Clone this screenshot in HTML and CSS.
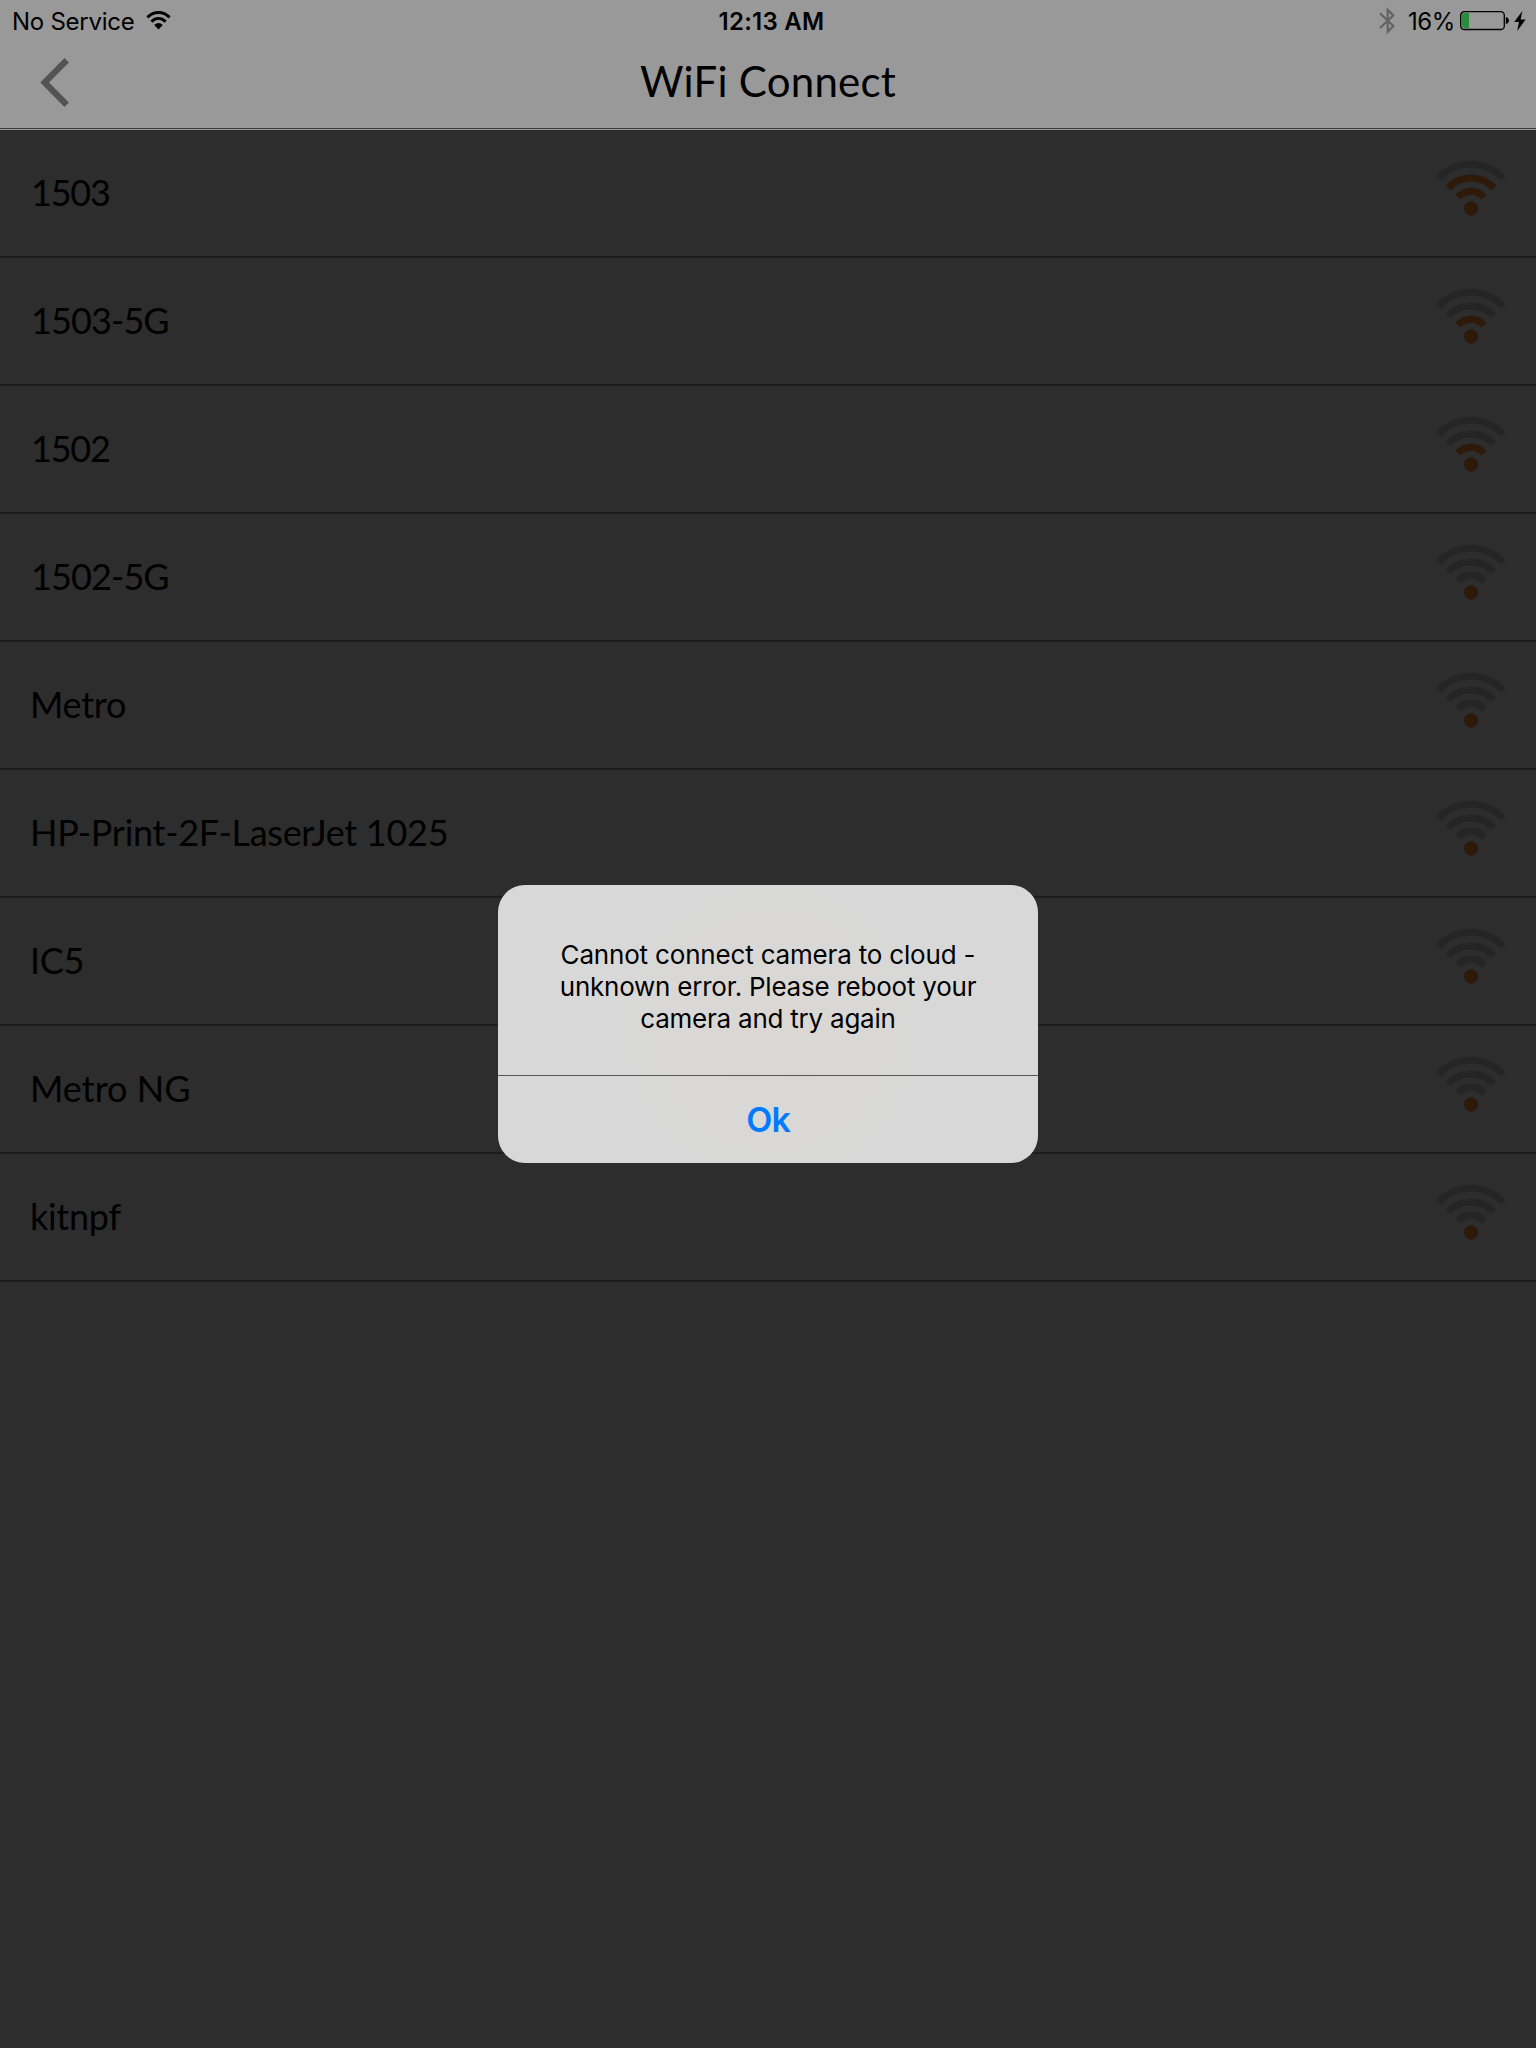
FILE: index.html
```html
<!DOCTYPE html>
<html lang="en">
<head>
<meta charset="utf-8">
<title>WiFi Connect</title>
<link rel="stylesheet" href="styles.css">
</head>
<body>
<svg class="defs" width="0" height="0" aria-hidden="true">
  <symbol id="signal" viewBox="0 0 70 57">
    <path class="arc arc-3" d="M3 18.5A43.2 43.2 0 0 1 67 18.5"/>
    <path class="arc arc-2" d="M12.3 27.8A31 31 0 0 1 57.7 27.8"/>
    <path class="arc arc-1" d="M22 37.3A17.1 17.1 0 0 1 48 37.3"/>
    <circle class="dot" cx="35" cy="48.5" r="7"/>
  </symbol>
</svg>
<header class="header">
  <div class="status">
    <div class="status-left">
      <span class="carrier">No Service</span>
      <svg class="status-wifi" width="26" height="20" viewBox="0 0 26 20">
        <path d="M1.4 6.3C8 0 17 0 23.6 6.3M5.4 10.6C9.8 6.5 15.2 6.5 19.6 10.6" fill="none" stroke="#000" stroke-width="3"/>
        <path d="M8.2 14.1C11 11.4 14 11.4 16.8 14.1L12.5 18.6Z"/>
      </svg>
    </div>
    <span class="time">12:13 AM</span>
    <div class="status-right">
      <svg width="17" height="28" viewBox="0 0 17 28"><path d="M1 6.3L14.3 19L8.7 24.8V2.8L14.3 8.5L1 21" fill="none" stroke="#636363" stroke-width="2.2"/></svg>
      <span class="percent">16%</span>
      <svg width="50" height="20" viewBox="0 0 50 20"><rect x=".7" y=".7" width="43.6" height="17.8" rx="3.6" fill="none" stroke="#000" stroke-width="1.3"/><path d="M2 4Q2 2 4 2H9V17H4Q2 17 2 15Z" fill="#2c8a3e"/><path d="M45.8 6Q49 7 49 9.6T45.8 13.2Z"/></svg>
      <svg class="bolt" width="12" height="20" viewBox="0 0 12 20"><path d="M8.4 0L.2 11H5L3.2 20L11.6 8.4H6.6Z"/></svg>
    </div>
  </div>
  <div class="nav">
    <svg class="back" width="30" height="50" viewBox="0 0 30 50"><path d="M26.7 2.2L4.6 24.5L26.7 46.8" fill="none" stroke="#535353" stroke-width="6.2"/></svg>
    <h1 class="title">WiFi Connect</h1>
  </div>
</header>
<main class="list">
  <div class="row level-2"><span class="name digits">1503</span><svg class="signal"><use href="#signal"/></svg></div>
  <div class="row level-1"><span class="name digits-g">1503-5G</span><svg class="signal"><use href="#signal"/></svg></div>
  <div class="row level-1"><span class="name digits">1502</span><svg class="signal"><use href="#signal"/></svg></div>
  <div class="row"><span class="name digits-g">1502-5G</span><svg class="signal"><use href="#signal"/></svg></div>
  <div class="row"><span class="name">Metro</span><svg class="signal"><use href="#signal"/></svg></div>
  <div class="row"><span class="name">HP-Print-2F-LaserJet 1025</span><svg class="signal"><use href="#signal"/></svg></div>
  <div class="row"><span class="name">IC5</span><svg class="signal"><use href="#signal"/></svg></div>
  <div class="row"><span class="name wide">Metro NG</span><svg class="signal"><use href="#signal"/></svg></div>
  <div class="row"><span class="name">kitnpf</span><svg class="signal"><use href="#signal"/></svg></div>
</main>
<div class="alert" role="alertdialog">
  <p class="message"><span class="m1">Cannot connect camera to cloud -</span><br>unknown error. Please reboot your<br>camera and try again</p>
  <button class="ok">Ok</button>
</div>
</body>
</html>
```
FILE: styles.css
```css
* { box-sizing: border-box; }
body { margin: 0; min-height: 2048px; background: #2d2d2d; color: #000; font-family: Lato, sans-serif; }
.defs { display: block; height: 0; }
.header { height: 130px; background: #999; border-bottom: 1px solid #999; box-shadow: inset 0 -1px #3c3c3c; }
.status { display: grid; grid-template-columns: 1fr auto 1fr; align-items: center; height: 41px; padding: 0 10px 0 12px; font: 400 24px/41px Inter, sans-serif; white-space: nowrap; }
.status-left, .status-right { display: flex; align-items: center; }
.status-right { justify-content: flex-end; }
.carrier { letter-spacing: -.25px; }
.carrier, .time, .percent { padding-top: 1px; }
.status-wifi { margin-left: 11px; }
.time { font-weight: 600; padding-left: 5px; letter-spacing: .25px; }
.percent { margin: 0 5px 0 12px; letter-spacing: -.4px; }
.bolt { margin-left: 4px; }
.nav { display: grid; grid-template-columns: 80px 1fr 80px; align-items: center; height: 83px; }
.back { margin-left: 40px; }
.title { margin: 0; padding-bottom: 2px; font-size: 42px; line-height: 81px; font-weight: 400; letter-spacing: .25px; text-align: center; }
.row { display: flex; justify-content: space-between; align-items: flex-start; height: 128px; padding: 0 30px 0 30px; border-bottom: 2px solid #1c1c1c; }
.name { font-size: 36px; line-height: 124px; font-weight: 400; letter-spacing: -.28px; }
.digits { padding-left: 1px; letter-spacing: -1.2px; }
.digits-g { padding-left: 1px; letter-spacing: -.9px; }
.wide { letter-spacing: 0; }
.signal { --a1: #252525; --a2: #252525; width: 70px; height: 57px; margin-top: 30px; }
.level-1 .signal, .level-2 .signal { --a1: #2f1a0a; }
.level-2 .signal { --a2: #2f1a0a; }
.arc { fill: none; stroke: #252525; stroke-width: 7; }
.arc-2 { stroke: var(--a2); }
.arc-1 { stroke: var(--a1); }
.dot { fill: #2f1a0a; }
.alert { position: absolute; left: 498px; top: 885px; width: 540px; height: 278px; border-radius: 27px; background: radial-gradient(circle at 274px 145px, #dbd7d4 0, #d9d8d6 80px, #d8d8d8 150px); font-family: Inter, sans-serif; display: flex; flex-direction: column; overflow: hidden; }
.message { margin: 0; height: 191px; padding-top: 54px; border-bottom: 1px solid #565656; font-size: 26px; line-height: 32px; letter-spacing: -.23px; text-align: center; white-space: nowrap; }
.m1 { letter-spacing: -.18px; }
.ok { flex: 1; border: 0; padding: 0; background: none; color: #007aff; font: 600 34px/40px Inter, sans-serif; letter-spacing: -1px; }
```
